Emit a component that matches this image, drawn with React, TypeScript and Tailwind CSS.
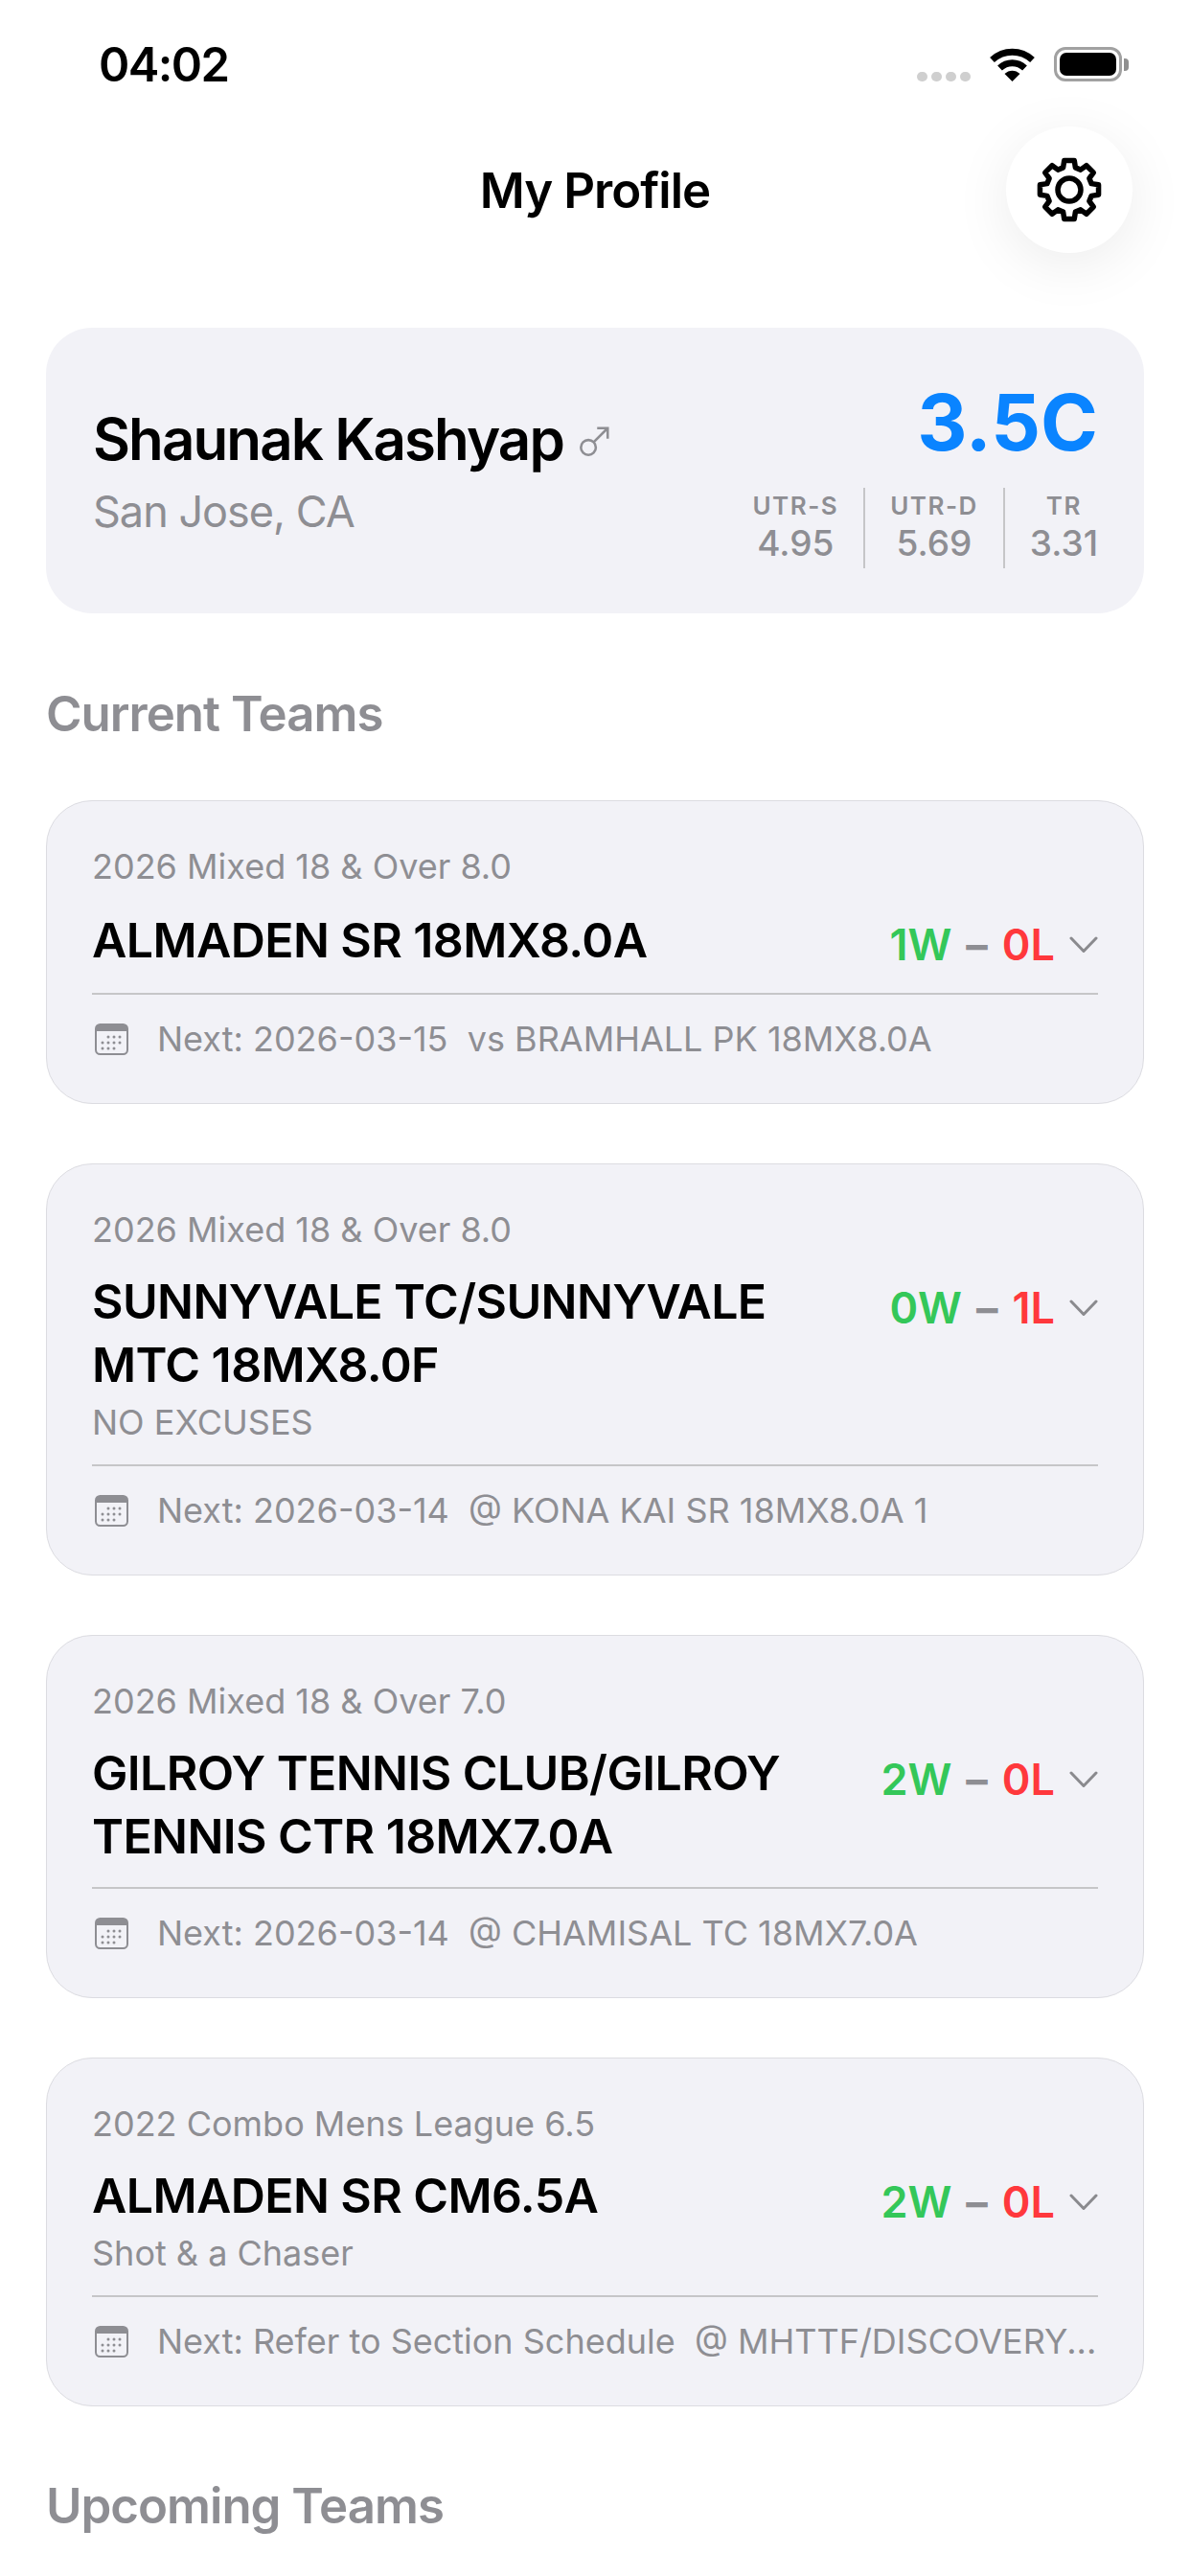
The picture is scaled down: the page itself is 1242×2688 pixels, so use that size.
import React from 'react';

interface Team {
  league: string;
  name: string[];
  subtitle?: string;
  wins: number;
  losses: number;
  next: string;
}

const teams: Team[] = [
  {
    league: '2026 Mixed 18 & Over 8.0',
    name: ['ALMADEN SR 18MX8.0A'],
    wins: 1,
    losses: 0,
    next: 'Next: 2026-03-15  vs BRAMHALL PK 18MX8.0A',
  },
  {
    league: '2026 Mixed 18 & Over 8.0',
    name: ['SUNNYVALE TC/SUNNYVALE', 'MTC 18MX8.0F'],
    subtitle: 'NO EXCUSES',
    wins: 0,
    losses: 1,
    next: 'Next: 2026-03-14  @ KONA KAI SR 18MX8.0A 1',
  },
  {
    league: '2026 Mixed 18 & Over 7.0',
    name: ['GILROY TENNIS CLUB/GILROY', 'TENNIS CTR 18MX7.0A'],
    wins: 2,
    losses: 0,
    next: 'Next: 2026-03-14  @ CHAMISAL TC 18MX7.0A',
  },
  {
    league: '2022 Combo Mens League 6.5',
    name: ['ALMADEN SR CM6.5A'],
    subtitle: 'Shot & a Chaser',
    wins: 2,
    losses: 0,
    next: 'Next: Refer to Section Schedule  @ MHTTF/DISCOVERY...',
  },
];

const ratings = [
  { label: 'UTR-S', value: '4.95' },
  { label: 'UTR-D', value: '5.69' },
  { label: 'TR', value: '3.31' },
];

// 8 tooth gear outline around a 36 unit centre
const gearPath = () => {
  const pts: string[] = [];
  for (let i = 0; i < 8; i++) {
    const a = (i * Math.PI) / 4 - Math.PI / 2;
    const step = [
      [-0.27, 24],
      [-0.17, 31],
      [0.17, 31],
      [0.27, 24],
    ];
    step.forEach(([da, r]) => {
      pts.push(`${(36 + r * Math.cos(a + da)).toFixed(2)} ${(36 + r * Math.sin(a + da)).toFixed(2)}`);
    });
  }
  return `M${pts.join('L')}Z`;
};

const WifiIcon = () => (
  <svg width="47" height="36" viewBox="0 0 47 36" fill="none">
    <path d="M2.5 13.5C14.5 2.5 32.5 2.5 44.5 13.5" stroke="#000" strokeWidth="7" />
    <path d="M10.5 22C18 15 29 15 36.5 22" stroke="#000" strokeWidth="7" />
    <path d="M15.5 28C20 23.5 27 23.5 31.5 28L23.5 36Z" fill="#000" />
  </svg>
);

const BatteryIcon = () => (
  <div className="flex items-center">
    <div className="w-[71px] h-[36px] rounded-[12px] border-[3px] border-[#a1a1a1] p-[3px]">
      <div className="w-full h-full rounded-[7px] bg-black" />
    </div>
    <div className="w-[5px] h-[13px] ml-[2px] rounded-r-[4px] bg-[#8f8f8f]" />
  </div>
);

const CalendarIcon = () => (
  <svg width="35" height="33" viewBox="0 0 35 33" className="shrink-0" fill="none">
    <rect x="1" y="1" width="33" height="31" rx="4.5" fill="#f2f2f7" stroke="#8e8e93" strokeWidth="2" />
    <path d="M1 8V5.5A4.5 4.5 0 0 1 5.5 1h24A4.5 4.5 0 0 1 34 5.5V8Z" fill="#8e8e93" />
    {[14, 20, 26].map((y, r) =>
      [8, 14, 20, 26].map((x, c) =>
        (r === 0 && c === 0) || (r === 2 && c === 3) ? null : (
          <circle key={`${r}-${c}`} cx={x} cy={y} r="1.5" fill="#8e8e93" />
        )
      )
    )}
  </svg>
);

const TeamCard: React.FC<{ team: Team }> = ({ team }) => (
  <div className="rounded-[48px] border-[1.5px] border-[#dcdce1] bg-[#f2f2f7] px-[47px] pt-[46px] pb-[45px]">
    <div className="text-[36px] leading-[44px] text-[#8e8e93]">{team.league}</div>
    <div className="mt-[18px] flex items-start justify-between">
      <div className="min-h-[72px] pt-[2px] flex flex-col justify-center">
        {team.name.map((line) => (
          <div key={line} className="text-[50px] leading-[66px] font-semibold tracking-[-0.6px] text-black whitespace-nowrap">
            {line}
          </div>
        ))}
        {team.subtitle && <div className="mt-[3px] text-[36px] leading-[48px] text-[#8e8e93]">{team.subtitle}</div>}
      </div>
      <div className="flex items-center h-[72px] pt-[12px] text-[45px] font-semibold">
        <span className="text-[#34c759]">{team.wins}W</span>
        <span className="mx-[15px] font-bold text-[#8e8e93]">–</span>
        <span className="text-[#ff383c]">{team.losses}L</span>
        <svg width="30" height="18" viewBox="0 0 30 18" fill="none" className="ml-[15px]" stroke="#8a8a8e" strokeWidth="3" strokeLinecap="round" strokeLinejoin="round">
          <path d="M2 2L15 15.5L28 2" />
        </svg>
      </div>
    </div>
    <div className="mt-[20px] border-t-[2px] border-[#c6c6c8] pt-[24px] flex items-center gap-[30px] pl-[3px]">
      <CalendarIcon />
      <div className="text-[36px] leading-[44px] text-[#8e8e93] whitespace-pre truncate">{team.next}</div>
    </div>
  </div>
);

export default function App() {
  return (
    <div className="w-[1242px] h-[2688px] overflow-hidden bg-white font-['Inter',sans-serif]">
      {/* Status bar */}
      <div className="flex items-start justify-between h-[133px] pt-[49px] pl-[103px] pr-[64px]">
        <div className="mt-[1px] text-[49px] leading-[36px] font-semibold tracking-[-1.6px] text-black">04:02</div>
        <div className="flex items-center">
          <div className="flex gap-[4px] mt-[25px] mr-[20px]">
            {[0, 1, 2, 3].map((i) => (
              <div key={i} className="w-[11px] h-[10px] rounded-full bg-[#cfcfcf]" />
            ))}
          </div>
          <WifiIcon />
          <div className="ml-[20px]">
            <BatteryIcon />
          </div>
        </div>
      </div>

      {/* Header */}
      <div className="relative flex items-center justify-center h-[132px]">
        <div className="text-[51px] font-semibold tracking-[-1px] text-black">My Profile</div>
        <div className="absolute right-[60px] -top-[1px] w-[132px] h-[132px] rounded-full bg-white shadow-[0_12px_60px_rgba(0,0,0,0.08)] flex items-center justify-center">
          <svg width="72" height="72" viewBox="0 0 72 72" fill="none">
            <path d={gearPath()} stroke="#000" strokeWidth="5.5" strokeLinejoin="round" />
            <circle cx="36" cy="36" r="12" stroke="#000" strokeWidth="5.5" />
          </svg>
        </div>
      </div>

      <div className="px-[48px]">
        {/* Profile card */}
        <div className="mt-[77px] h-[298px] rounded-[48px] bg-[#f2f2f7] pl-[49px] pr-[48px] flex justify-between">
          <div className="pt-[76px]">
            <div className="flex items-center">
              <span className="text-[60px] leading-[80px] font-semibold tracking-[-1.9px] text-black">Shaunak Kashyap</span>
              <svg width="33" height="33" viewBox="0 0 36 36" className="ml-[16px] mt-[4px]" fill="none" stroke="#8e8e93" strokeWidth="2.8">
                <circle cx="11" cy="25" r="8.5" />
                <path d="M17 19L33 3M21 3h12v12" />
              </svg>
            </div>
            <div className="mt-[9px] text-[45px] leading-[54px] tracking-[-1px] text-[#8e8e93]">San Jose, CA</div>
          </div>
          <div className="flex flex-col items-end pt-[50px]">
            <div className="text-[81px] leading-[98px] font-bold text-[#0a84ff]">3.5C</div>
            <div className="mt-[19px] flex h-[84px]">
              {ratings.map((r, i) => (
                <div
                  key={r.label}
                  className={`flex flex-col items-center justify-center ${i > 0 ? 'border-l-[2px] border-[#c6c6c8] pl-[26px]' : ''} ${i < 2 ? 'pr-[26px]' : ''}`}
                >
                  <div className="text-[26px] leading-[32px] font-semibold tracking-[1.5px] text-[#8e8e93]">{r.label}</div>
                  <div className="text-[37px] leading-[46px] font-medium text-[#8e8e93]">{r.value}</div>
                </div>
              ))}
            </div>
          </div>
        </div>

        <div className="mt-[74px] text-[51px] leading-[62px] font-semibold tracking-[-1px] text-[#8e8e93]">Current Teams</div>

        <div className="mt-[59px] flex flex-col gap-[62px]">
          {teams.map((team) => (
            <TeamCard key={team.name[0]} team={team} />
          ))}
        </div>

        <div className="mt-[73px] text-[51px] leading-[62px] font-semibold tracking-[-1px] text-[#8e8e93]">Upcoming Teams</div>
      </div>
    </div>
  );
}
